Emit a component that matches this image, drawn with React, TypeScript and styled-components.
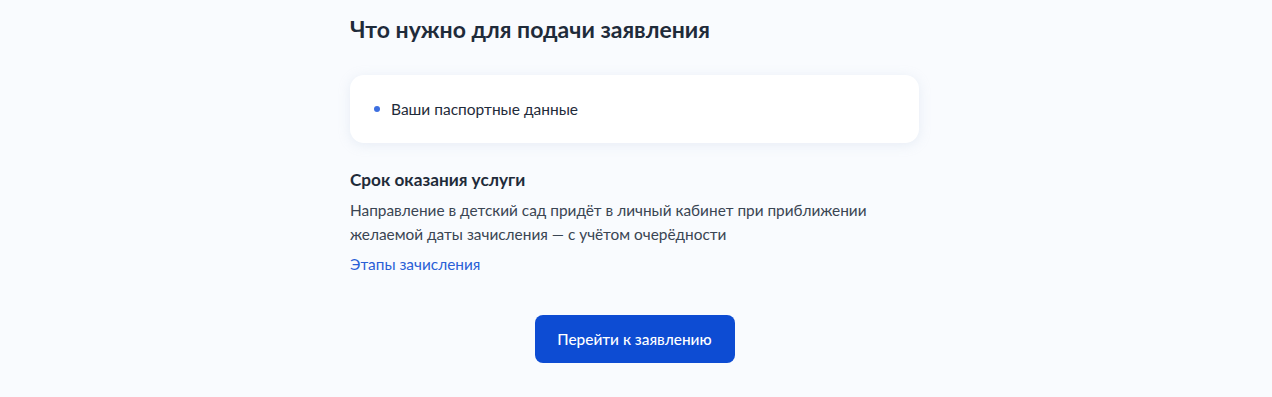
import React from "react";
import styled, { createGlobalStyle } from "styled-components";

const GlobalStyle = createGlobalStyle`
  html, body {
    margin: 0;
    padding: 0;
    background: #f9fbfe;
  }
  body {
    font-family: Lato, "Noto Sans", "Liberation Sans", sans-serif;
    color: #0b1f33;
  }
`;

const Page = styled.main`
  width: 1272px;
  height: 397px;
  background: #f9fbfe;
  display: flex;
  justify-content: center;
  box-sizing: border-box;
  padding-top: 15px;
`;

const Column = styled.section`
  width: 569px;
  margin-left: -3px;
  display: flex;
  flex-direction: column;
`;

const Title = styled.h2`
  margin: 0;
  font-size: 23px;
  line-height: 28px;
  font-weight: 700;
  color: #1f2b3a;
`;

const Card = styled.div`
  margin-top: 32px;
  background: #ffffff;
  border-radius: 14px;
  box-shadow: 0 2px 12px rgba(180, 195, 220, 0.25);
  padding: 22px 24px;
`;

const List = styled.ul`
  margin: 0;
  padding: 0;
  list-style: none;
`;

const Item = styled.li`
  display: flex;
  align-items: center;
  gap: 11px;
  font-size: 15.5px;
  line-height: 24px;
  color: #1f2b3a;
  &::before {
    content: "";
    width: 6px;
    height: 6px;
    border-radius: 50%;
    background: #3d6fe0;
    flex-shrink: 0;
  }
`;

const SubTitle = styled.h3`
  margin: 25px 0 0;
  font-size: 17.2px;
  line-height: 24px;
  font-weight: 700;
  color: #1f2b3a;
`;

const Text = styled.p`
  margin: 6px 0 0;
  font-size: 15.4px;
  line-height: 24px;
  color: #3a4553;
`;

const Link = styled.a`
  margin-top: 6px;
  font-size: 15.4px;
  line-height: 24px;
  color: #2a5fd6;
  text-decoration: none;
  align-self: flex-start;
`;

const Button = styled.button`
  align-self: center;
  margin-top: 39px;
  width: 200px;
  height: 48px;
  border: none;
  border-radius: 8px;
  background: #0d4cd3;
  color: #ffffff;
  font-family: Lato, "Noto Sans", sans-serif;
  font-size: 15.4px;
  font-weight: 500;
  cursor: pointer;
`;

export default function App() {
  return (
    <>
      <GlobalStyle />
      <Page>
        <Column>
          <Title>Что нужно для подачи заявления</Title>
          <Card>
            <List>
              <Item>Ваши паспортные данные</Item>
            </List>
          </Card>
          <SubTitle>Срок оказания услуги</SubTitle>
          <Text>
            Направление в детский сад придёт в личный кабинет при приближении
            <br />
            желаемой даты зачисления — с учётом очерёдности
          </Text>
          <Link href="#">Этапы зачисления</Link>
          <Button>Перейти к заявлению</Button>
        </Column>
      </Page>
    </>
  );
}
